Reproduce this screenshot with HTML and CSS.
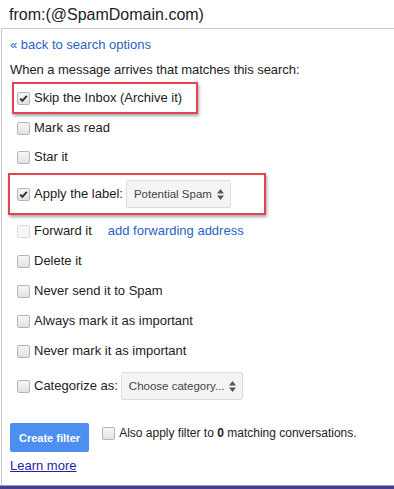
FILE: index.html
```html
<!DOCTYPE html>
<html>
<head>
<meta charset="utf-8">
<link rel="stylesheet" href="styles.css">
</head>
<body>
<div class="page">
  <div class="title">from:(@SpamDomain.com)</div>
  <div class="panel">
    <a class="back" href="#">« back to search options</a>
    <div class="intro">When a message arrives that matches this search:</div>
    <div class="rows">
      <div class="row hl hl-skip"><span class="cb checked"><svg viewBox="0 0 13 13" width="13" height="13"><path d="M3.2 6.6 L5.4 8.8 L9.8 3.8" fill="none" stroke="#333" stroke-width="2"/></svg></span><span class="lbl">Skip the Inbox (Archive it)</span></div>
      <div class="row r-mark"><span class="cb"></span><span class="lbl">Mark as read</span></div>
      <div class="row"><span class="cb"></span><span class="lbl">Star it</span></div>
      <div class="row hl hl-label"><span class="cb checked"><svg viewBox="0 0 13 13" width="13" height="13"><path d="M3.2 6.6 L5.4 8.8 L9.8 3.8" fill="none" stroke="#333" stroke-width="2"/></svg></span><span class="lbl">Apply the label:</span><span class="select">Potential Spam<svg class="arr" viewBox="0 0 7 11" width="7" height="11"><path d="M0 4.5 L3.5 0 L7 4.5 Z M0 6.5 L3.5 11 L7 6.5 Z" fill="#555"/></svg></span></div>
      <div class="row r-fwd"><span class="cb disabled"></span><span class="lbl">Forward it</span><a class="fwd-link" href="#">add forwarding address</a></div>
      <div class="row"><span class="cb"></span><span class="lbl">Delete it</span></div>
      <div class="row"><span class="cb"></span><span class="lbl">Never send it to Spam</span></div>
      <div class="row"><span class="cb"></span><span class="lbl">Always mark it as important</span></div>
      <div class="row"><span class="cb"></span><span class="lbl">Never mark it as important</span></div>
      <div class="row r-cat"><span class="cb"></span><span class="lbl">Categorize as:</span><span class="select sel-cat">Choose category...<svg class="arr" viewBox="0 0 7 11" width="7" height="11"><path d="M0 4.5 L3.5 0 L7 4.5 Z M0 6.5 L3.5 11 L7 6.5 Z" fill="#555"/></svg></span></div>
    </div>
    <div class="footer">
      <button class="create">Create filter</button>
      <div class="also"><span class="cb"></span><span class="lbl">Also apply filter to <b>0</b> matching conversations.</span></div>
    </div>
    <a class="learn" href="#">Learn more</a>
  </div>
  <div class="bottombar"></div>
</div>
</body>
</html>
```
FILE: styles.css
```css
html, body {
  margin: 0;
  padding: 0;
  background: #fff;
}
body {
  font-family: "Liberation Sans", Arial, sans-serif;
  color: #222;
  font-size: 13px;
}
.page {
  width: 394px;
  height: 489px;
  overflow: hidden;
  display: flex;
  flex-direction: column;
}
.title {
  height: 28px;
  line-height: 30px;
  padding-left: 9px;
  font-size: 16px;
  color: #222;
  flex: none;
}
.panel {
  flex: 1;
  margin-left: 1px;
  border-top: 1px solid #c8c8c8;
  border-left: 1px solid #c8c8c8;
  padding-left: 8px;
  display: flex;
  flex-direction: column;
  align-items: flex-start;
}
.back {
  margin-top: 8px;
  line-height: 16px;
  color: #2a62c4;
  text-decoration: none;
}
.intro {
  margin-top: 9px;
  line-height: 16px;
  letter-spacing: -0.05px;
}
.rows {
  margin-top: 4px;
  display: flex;
  flex-direction: column;
  align-items: flex-start;
}
.row {
  display: flex;
  align-items: center;
  height: 30px;
  padding-left: 7px;
  box-sizing: border-box;
}
.r-mark { height: 28px; }
.r-fwd { margin-top: 1px; }
.r-cat { height: 40px; }
.lbl { line-height: 16px; }
.cb {
  width: 13px;
  height: 13px;
  box-sizing: border-box;
  border: 1px solid #b4b4b4;
  border-radius: 2px;
  background: linear-gradient(#f6f6f6, #e2e2e2);
  margin-right: 4px;
  flex: none;
  position: relative;
}
.cb svg {
  position: absolute;
  left: -1px;
  top: -1px;
}
.cb.disabled {
  border-color: #dadada;
  background: #f6f6f6;
}
.hl {
  border: 2px solid #e2454d;
  box-shadow: 1px 2px 3px rgba(0, 0, 0, 0.35);
}
.hl-skip {
  height: 32px;
  margin-left: 2px;
  padding-left: 3px;
  padding-right: 14px;
}
.hl-label {
  height: 42px;
  margin-top: 1px;
  margin-left: -2px;
  padding-left: 7px;
  padding-right: 33px;
}
.select {
  display: flex;
  align-items: center;
  height: 28px;
  box-sizing: border-box;
  margin-left: 3px;
  padding: 0 6px 0 7px;
  border: 1px solid #dcdcdc;
  border-radius: 2px;
  background: #f4f4f4;
  font-size: 11.5px;
  color: #444;
}
.sel-cat { margin-left: 3px; }
.arr { margin-left: 5px; }
.sel-cat .arr { margin-left: 4px; }
.fwd-link {
  margin-left: 16px;
  color: #2a62c4;
  text-decoration: none;
  line-height: 16px;
}
.footer {
  margin-top: 17px;
  display: flex;
  align-items: flex-start;
}
.create {
  height: 29px;
  padding: 0 9px;
  border: none;
  border-radius: 2px;
  background: #4d8ff0;
  color: #fff;
  font-family: "Liberation Sans", Arial, sans-serif;
  font-weight: bold;
  font-size: 11px;
}
.also {
  display: flex;
  align-items: center;
  margin-left: 13px;
  margin-top: 2px;
  height: 16px;
  font-size: 12px;
}
.learn {
  margin-top: 6px;
  line-height: 16px;
  color: #1f22a8;
  text-decoration: underline;
}
.bottombar {
  flex: none;
  height: 3px;
  background: #463c98;
  border-top: 1px solid #9d94d2;
}
```
